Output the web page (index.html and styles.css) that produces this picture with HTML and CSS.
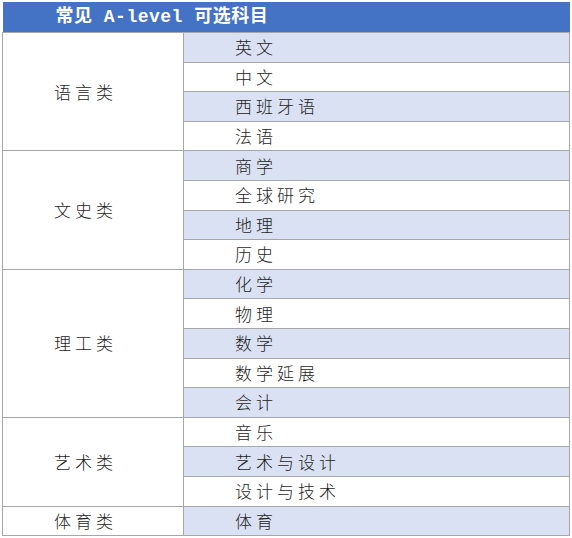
FILE: index.html
```html
<!DOCTYPE html>
<html lang="zh">
<head>
<meta charset="utf-8">
<link rel="stylesheet" href="styles.css">
</head>
<body>
<table class="subjects">
  <colgroup>
    <col class="col-cat">
    <col class="col-sub">
  </colgroup>
  <thead>
    <tr><th colspan="2" class="title">常见 A-level 可选科目</th></tr>
  </thead>
  <tbody>
    <tr><td rowspan="4" class="cat">语言类</td><td class="sub alt">英文</td></tr>
    <tr><td class="sub">中文</td></tr>
    <tr><td class="sub alt">西班牙语</td></tr>
    <tr><td class="sub">法语</td></tr>
    <tr><td rowspan="4" class="cat">文史类</td><td class="sub alt">商学</td></tr>
    <tr><td class="sub">全球研究</td></tr>
    <tr><td class="sub alt">地理</td></tr>
    <tr><td class="sub">历史</td></tr>
    <tr><td rowspan="5" class="cat">理工类</td><td class="sub alt">化学</td></tr>
    <tr><td class="sub">物理</td></tr>
    <tr><td class="sub alt">数学</td></tr>
    <tr><td class="sub">数学延展</td></tr>
    <tr><td class="sub alt">会计</td></tr>
    <tr><td rowspan="3" class="cat">艺术类</td><td class="sub">音乐</td></tr>
    <tr><td class="sub alt">艺术与设计</td></tr>
    <tr><td class="sub">设计与技术</td></tr>
    <tr><td class="cat">体育类</td><td class="sub alt">体育</td></tr>
  </tbody>
</table>
</body>
</html>
```
FILE: styles.css
```css
html, body {
  margin: 0;
  padding: 0;
  background: #ffffff;
}
body {
  padding: 2px 0 0 2px;
  font-family: "Noto Sans CJK SC", "Liberation Sans", sans-serif;
  color: #1e1e1e;
}
.subjects {
  border-collapse: collapse;
  width: 567px;
  table-layout: fixed;
}
.col-cat {
  width: 181px;
}
.col-sub {
  width: 386px;
}
.subjects .title {
  height: 30px;
  padding: 0 0 0 53px;
  background: #4472c4;
  color: #ffffff;
  text-align: left;
  font-family: "Liberation Mono", "Noto Sans CJK SC", monospace;
  font-weight: bold;
  font-size: 18px;
  letter-spacing: 0.5px;
  line-height: 30px;
  border: none;
}
.subjects td {
  border: 1px solid #a4a6aa;
  height: 28.6px;
  padding: 0;
  font-size: 17px;
  font-weight: 300;
  letter-spacing: 4px;
  line-height: 20px;
}
.subjects .cat {
  background: #ffffff;
  padding-left: 51px;
  text-align: left;
}
.subjects .sub {
  padding-left: 51px;
  background: #ffffff;
}
.subjects .sub.alt {
  background: #d9e1f2;
}
```
